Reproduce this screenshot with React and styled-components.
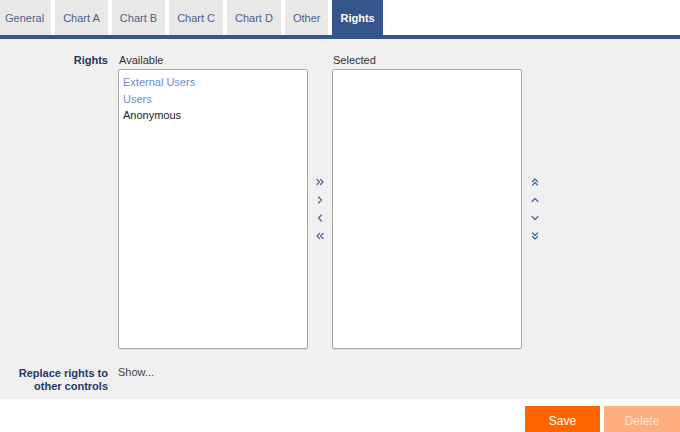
import styled, { createGlobalStyle } from 'styled-components';
import { ChevronsRight, ChevronRight, ChevronLeft, ChevronsLeft, ChevronsUp, ChevronUp, ChevronDown, ChevronsDown } from 'lucide-react';

const Global = createGlobalStyle`
  html, body { margin: 0; padding: 0; background: #fff; }
  body { font-family: "Liberation Sans", Arial, sans-serif; font-size: 11px; color: #333; }
`;

const Page = styled.div`
  width: 680px;
  height: 432px;
  display: flex;
  flex-direction: column;
  overflow: hidden;
`;

const TabBar = styled.div`
  display: flex;
  flex-shrink: 0;
  gap: 4px;
  height: 35px;
  border-bottom: 4px solid #34568b;
`;

const Tab = styled.div`
  display: flex;
  align-items: center;
  justify-content: center;
  padding: 0 ${p => (p.$first ? '7px 0 5px' : '8px')};
  background: ${p => (p.$active ? '#34568b' : '#e8e8e8')};
  color: ${p => (p.$active ? '#fff' : '#4d6189')};
  font-weight: ${p => (p.$active ? 'bold' : 'normal')};
  font-size: 11px;
`;

const Body = styled.div`
  background: #f0f0f0;
  height: 360px;
  flex-shrink: 0;
  padding-top: 14px;
  box-sizing: border-box;
  display: flex;
  flex-direction: column;
  gap: 17px;
`;

const FormRow = styled.div`
  display: grid;
  grid-template-columns: 108px 1fr;
  column-gap: 10px;
`;

const Label = styled.div`
  text-align: right;
  font-weight: bold;
  color: #1e3a6b;
  line-height: 13px;
  padding-top: 1px;
`;

const Lists = styled.div`
  display: flex;
  align-items: flex-end;
`;

const ListCol = styled.div`
  display: flex;
  flex-direction: column;
  gap: 2px;
`;

const ListTitle = styled.div`
  color: #333;
  line-height: 14px;
  padding-left: 1px;
`;

const ListBox = styled.div`
  width: 190px;
  height: 280px;
  box-sizing: border-box;
  background: #fff;
  border: 1px solid #a9a9a9;
  border-radius: 2px;
  box-shadow: 0 1px 1px rgba(0, 0, 0, 0.08);
  padding: 4px 4px;
`;

const Item = styled.div`
  line-height: 16.5px;
  color: ${p => (p.$group ? '#6b8fc8' : '#222')};
`;

const Arrows = styled.div`
  width: ${p => p.$w}px;
  height: 280px;
  display: flex;
  flex-direction: column;
  align-items: center;
  justify-content: center;
  gap: 6px;
  color: #4a6a9c;
`;

const ShowLink = styled.div`
  color: #444;
  line-height: 13px;
`;

const Footer = styled.div`
  flex: 1;
  display: flex;
  justify-content: flex-end;
  align-items: flex-start;
  padding-top: 7px;
  gap: 4px;
`;

const Button = styled.div`
  width: ${p => p.$w}px;
  height: 30px;
  flex-shrink: 0;
  display: flex;
  align-items: center;
  justify-content: center;
  font-size: 12px;
  background: ${p => (p.$disabled ? '#ffae80' : '#ff6600')};
  color: ${p => (p.$disabled ? '#ffe2d2' : '#fff')};
`;

const tabs = ['General', 'Chart A', 'Chart B', 'Chart C', 'Chart D', 'Other', 'Rights'];

const icon = { size: 12, strokeWidth: 2.6 };

export default function App() {
  return (
    <Page>
      <Global />
      <TabBar>
        {tabs.map((t, i) => (
          <Tab key={t} $first={i === 0} $active={t === 'Rights'}>{t}</Tab>
        ))}
      </TabBar>
      <Body>
        <FormRow>
          <Label>Rights</Label>
          <Lists>
            <ListCol>
              <ListTitle>Available</ListTitle>
              <ListBox>
                <Item $group>External Users</Item>
                <Item $group>Users</Item>
                <Item>Anonymous</Item>
              </ListBox>
            </ListCol>
            <Arrows $w={24}>
              <ChevronsRight {...icon} />
              <ChevronRight {...icon} />
              <ChevronLeft {...icon} />
              <ChevronsLeft {...icon} />
            </Arrows>
            <ListCol>
              <ListTitle>Selected</ListTitle>
              <ListBox />
            </ListCol>
            <Arrows $w={26}>
              <ChevronsUp {...icon} />
              <ChevronUp {...icon} />
              <ChevronDown {...icon} />
              <ChevronsDown {...icon} />
            </Arrows>
          </Lists>
        </FormRow>
        <FormRow>
          <Label>Replace rights to<br />other controls</Label>
          <ShowLink>Show...</ShowLink>
        </FormRow>
      </Body>
      <Footer>
        <Button $w={75}>Save</Button>
        <Button $w={76} $disabled>Delete</Button>
      </Footer>
    </Page>
  );
}
